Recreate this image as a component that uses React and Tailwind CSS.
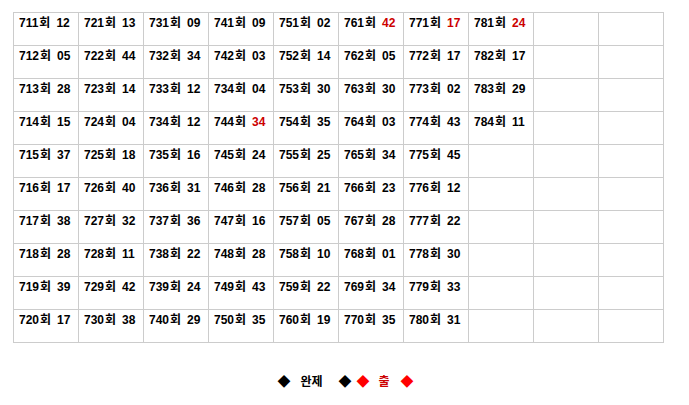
import React from "react";

const rows = [
  ["711|12", "721|13", "731|09", "741|09", "751|02", "761|42|r", "771|17|r", "781|24|r", "", ""],
  ["712|05", "722|44", "732|34", "742|03", "752|14", "762|05", "772|17", "782|17", "", ""],
  ["713|28", "723|14", "733|12", "734|04", "753|30", "763|30", "773|02", "783|29", "", ""],
  ["714|15", "724|04", "734|12", "744|34|r", "754|35", "764|03", "774|43", "784|11", "", ""],
  ["715|37", "725|18", "735|16", "745|24", "755|25", "765|34", "775|45", "", "", ""],
  ["716|17", "726|40", "736|31", "746|28", "756|21", "766|23", "776|12", "", "", ""],
  ["717|38", "727|32", "737|36", "747|16", "757|05", "767|28", "777|22", "", "", ""],
  ["718|28", "728|11", "738|22", "748|28", "758|10", "768|01", "778|30", "", "", ""],
  ["719|39", "729|42", "739|24", "749|43", "759|22", "769|34", "779|33", "", "", ""],
  ["720|17", "730|38", "740|29", "750|35", "760|19", "770|35", "780|31", "", "", ""],
];

function Cell({ v }) {
  if (!v) return <div className="bg-white h-[32px]" />;
  const [round, num, red] = v.split("|");
  return (
    <div className="bg-white h-[32px] pl-[5px] pt-[3px] leading-[15px] whitespace-nowrap">
      <span>{round}</span>
      <span className="ml-[1px]">회</span>
      <span className={"ml-[6px] " + (red ? "text-[#cc0000]" : "")}>{num}</span>
    </div>
  );
}

export default function App() {
  return (
    <div
      className="w-[689px] h-[405px] bg-white text-black text-[12px] font-bold"
      style={{ fontFamily: '"Liberation Sans", "Noto Sans CJK KR", sans-serif' }}
    >
      <div className="pt-[12px] pl-[13px]">
        <div className="w-[651px] grid grid-cols-[repeat(10,64px)] gap-px p-px bg-[#cccccc]">
          {rows.flatMap((r, i) => r.map((v, j) => <Cell key={i + "-" + j} v={v} />))}
        </div>
      </div>
      <div className="mt-[32px] flex justify-center items-center text-[12px] leading-[14px] pl-[2px]">
        <span className="text-[13px]">◆</span>
        <span className="ml-[10px]">완제</span>
        <span className="ml-[16px] text-[13px]">◆</span>
        <span className="ml-[5px] text-[13px] text-[#ff0000]">◆</span>
        <span className="ml-[9px] text-[#cc0000]">출</span>
        <span className="ml-[11px] text-[13px] text-[#ff0000]">◆</span>
      </div>
    </div>
  );
}
